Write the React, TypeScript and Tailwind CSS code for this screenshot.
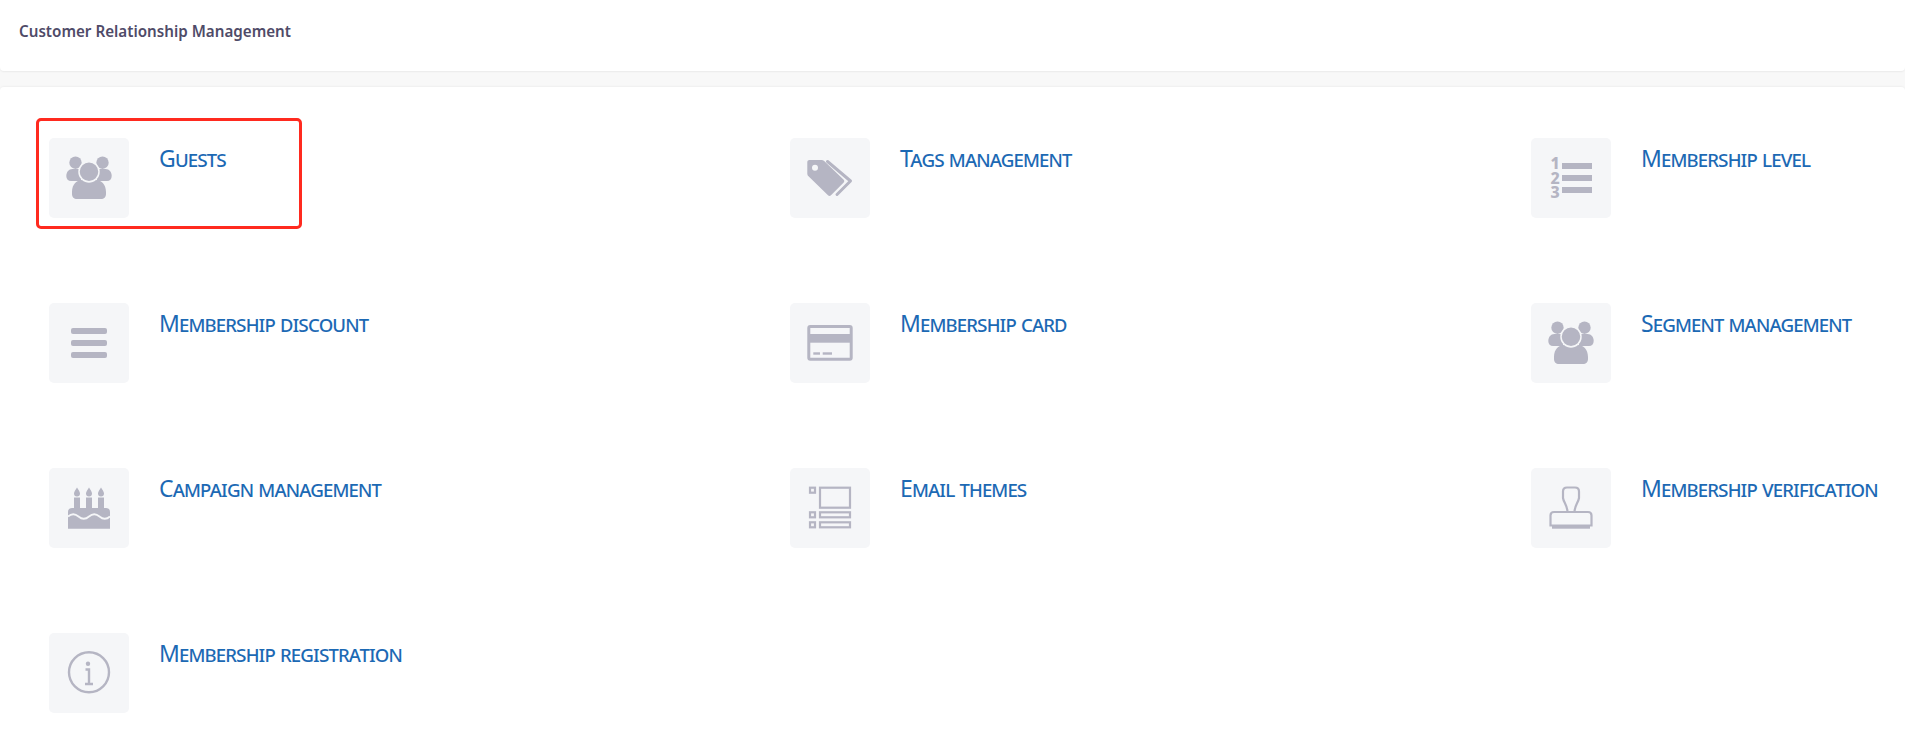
import type { ReactNode } from "react";

// Icons are all drawn on the 80x80 tile
const TILE = "#f5f6f8";
const INK = "#b5b5c3";

const GroupIcon = () => (
  <svg viewBox="0 0 80 80" className="w-20 h-20">
    <circle cx="26.5" cy="24.7" r="6.2" fill={INK} />
    <circle cx="53.5" cy="24.7" r="6.2" fill={INK} />
    <path d="M17.3 38c0-4 2.5-7 6-7h8.700v12h-10c-2.800 0-4.700-2-4.700-5z" fill={INK} />
    <path d="M62.700 38c0-4-2.500-7-6-7H48v12h10c2.800 0 4.700-2 4.700-5z" fill={INK} />
    <circle cx="40" cy="33.700" r="10" fill={INK} stroke={TILE} strokeWidth="1.500" />
    <path d="M23 54c0-8 5-12 10-12 2 1.800 4.500 2.800 7 2.800s5-1 7-2.800c5 0 10 4 10 12v2c0 3-2 5-5 5H28c-3 0-5-2-5-5z" fill={INK} />
  </svg>
);

const TagsIcon = () => (
  <svg viewBox="0 0 80 80" className="w-20 h-20">
    <path fillRule="evenodd" d="M19.500 22h12c1 0 2 .4 2.700 1.100l19.500 18.600c.8.800.8 1.900 0 2.700L41 57.300c-.9.900-2.200.9-3 0L18.500 38.300c-.8-.8-1.200-1.600-1.200-2.600V24.200c0-1.300.9-2.200 2.200-2.200zM25 26.700a3 3 0 1 0 0 6 3 3 0 0 0 0-6z" fill={INK} />
    <path d="M37.500 23.500l23 19.500L47 56.500" fill="none" stroke={INK} strokeWidth="3" strokeLinecap="round" strokeLinejoin="round" />
  </svg>
);

const NumberedIcon = () => (
  <svg viewBox="0 0 80 80" className="w-20 h-20">
    <rect x="31" y="25" width="30" height="6" fill={INK} />
    <rect x="31" y="37" width="30" height="6" fill={INK} />
    <rect x="31" y="49" width="30" height="6" fill={INK} />
    <text fill={INK} fontFamily="'Noto Sans', sans-serif" fontWeight="800" fontSize="16" textAnchor="middle">
      <tspan x="24" y="31">1</tspan>
      <tspan x="24" y="45.500">2</tspan>
      <tspan x="24" y="60">3</tspan>
    </text>
  </svg>
);

const MenuIcon = () => (
  <svg viewBox="0 0 80 80" className="w-20 h-20">
    <rect x="22" y="25" width="36" height="6" rx="2" fill={INK} />
    <rect x="22" y="37" width="36" height="6" rx="2" fill={INK} />
    <rect x="22" y="49" width="36" height="6" rx="2" fill={INK} />
  </svg>
);

const CardIcon = () => (
  <svg viewBox="0 0 80 80" className="w-20 h-20">
    <rect x="18.800" y="23.500" width="42.400" height="32.700" rx="1.500" fill="none" stroke={INK} strokeWidth="3" />
    <rect x="18" y="31" width="44" height="8.700" fill={INK} />
    <rect x="23.300" y="49.300" width="6.700" height="2.400" fill={INK} />
    <rect x="32.700" y="49.300" width="9.300" height="2.400" fill={INK} />
  </svg>
);

const CakeIcon = () => (
  <svg viewBox="0 0 80 80" className="w-20 h-20">
    <rect x="25" y="29.500" width="6" height="11" fill={INK} />
    <rect x="37" y="29.500" width="6" height="11" fill={INK} />
    <rect x="49" y="29.500" width="6" height="11" fill={INK} />
    <path d="M28 19.500c1.500 2.400 3 4.200 3 6a3 3 0 0 1-6 0c0-1.800 1.500-3.600 3-6zM40 19.500c1.500 2.400 3 4.200 3 6a3 3 0 0 1-6 0c0-1.800 1.500-3.600 3-6zM52 19.500c1.500 2.400 3 4.200 3 6a3 3 0 0 1-6 0c0-1.800 1.500-3.600 3-6z" fill={INK} />
    <path d="M23 40h34c2.500 0 4 1.500 4 4v16.700H19V44c0-2.500 1.500-4 4-4z" fill={INK} />
    <path d="M19 48.500c3.500-3 7-3 10.500 0s7 3 10.500 0 7-3 10.500 0 7 3 10.500 0" fill="none" stroke={TILE} strokeWidth="1.800" />
  </svg>
);

const FormIcon = () => (
  <svg viewBox="0 0 80 80" className="w-20 h-20" fill="none" stroke={INK} strokeWidth="2.200">
    <rect x="20" y="19.700" width="5" height="5" />
    <rect x="30" y="19.700" width="30" height="20" />
    <rect x="20" y="44.300" width="5" height="5" />
    <rect x="30" y="44.300" width="30" height="5" />
    <rect x="20" y="54.300" width="5" height="5" />
    <rect x="30" y="54.300" width="30" height="5" />
  </svg>
);

const StampIcon = () => (
  <svg viewBox="0 0 80 80" className="w-20 h-20" fill="none" stroke={INK} strokeWidth="2.200">
    <path d="M36.500 44c0-6-4-10-4.500-14v-6.500c0-2.500 1.500-4 4-4h8c2.500 0 4 1.500 4 4V30c-.5 4-4.500 8-4.500 14" />
    <path d="M23 44h34c2.200 0 3.500 1.300 3.500 3.500V57.500h-41v-10c0-2.200 1.300-3.500 3.500-3.500z" />
    <rect x="21" y="58" width="38" height="2.700" fill={INK} stroke="none" />
  </svg>
);

const InfoIcon = () => (
  <svg viewBox="0 0 80 80" className="w-20 h-20" fill="none" stroke={INK}>
    <circle cx="40" cy="39.300" r="20" strokeWidth="2.400" />
    <circle cx="39" cy="30.700" r="2.200" fill={INK} stroke="none" />
    <path d="M36.500 36.500H40v14M36 51h8" strokeWidth="2.400" />
  </svg>
);

const items: { label: string; icon: ReactNode; boxed?: boolean }[] = [
  { label: "Guests", icon: <GroupIcon />, boxed: true },
  { label: "Tags management", icon: <TagsIcon /> },
  { label: "Membership level", icon: <NumberedIcon /> },
  { label: "Membership discount", icon: <MenuIcon /> },
  { label: "Membership card", icon: <CardIcon /> },
  { label: "Segment management", icon: <GroupIcon /> },
  { label: "Campaign management", icon: <CakeIcon /> },
  { label: "Email themes", icon: <FormIcon /> },
  { label: "Membership verification", icon: <StampIcon /> },
  { label: "Membership registration", icon: <InfoIcon /> },
];

const MenuItem = (props: { label: string; icon: ReactNode; boxed?: boolean }) => {
  return (
    <div className="relative flex gap-[30px]">
      {props.boxed && (
        <div className="absolute left-[-13px] top-[-20px] w-[266px] h-[111px] border-[3px] border-[#ff2a1f] rounded-[5px]" />
      )}
      <div className="w-20 h-20 shrink-0 rounded-[5px] bg-[#f5f6f8]">{props.icon}</div>
      <a className="text-[23px] leading-[28px] mt-[6px] text-[#1c69b4] tracking-[-0.85px] [font-variant:small-caps]">{props.label}</a>
    </div>
  );
};

export default function App() {
  return (
    <div className="h-[734px] overflow-hidden bg-[#f8f8f8] font-['Noto_Sans',sans-serif]">
      <div className="h-[71px] bg-white rounded-b-[4px] shadow-[0_1px_2px_rgba(0,0,0,0.06)] pl-[19px] pt-[21px]">
        <h1 className="text-[15.2px] leading-[20px] font-semibold text-[#4f4b68]">Customer Relationship Management</h1>
      </div>
      <div className="mt-4 h-[647px] bg-white rounded-t-[4px] shadow-[0_-1px_2px_rgba(0,0,0,0.04)] pl-[49px] pt-[51px]">
        <div className="grid grid-cols-[repeat(3,741px)] gap-y-[85px]">
          {items.map((item) => (
            <MenuItem key={item.label} label={item.label} icon={item.icon} boxed={item.boxed} />
          ))}
        </div>
      </div>
    </div>
  );
}
